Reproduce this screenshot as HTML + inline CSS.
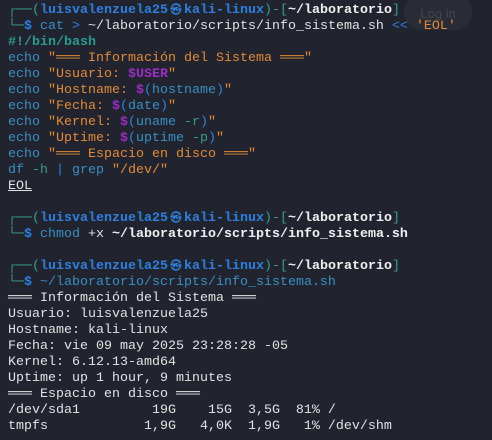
<!DOCTYPE html>
<html><head><meta charset="utf-8"><style>
html,body{margin:0;padding:0;background:#21242e;width:492px;height:440px;overflow:hidden;position:relative}
pre{margin:0;position:absolute;left:8px;top:3px;font-family:"Liberation Mono","DejaVu Sans Mono",monospace;font-size:13.33px;line-height:16px;color:#e2e2e2;white-space:pre}
.g{color:#3a9c8e}.b{color:#2f7fe0;font-weight:bold}.w{color:#f0f0f0;font-weight:bold}
.c{color:#3a8fc4}.o{color:#e28a3a}.p{color:#9b2fc4;font-weight:bold}.bl{color:#2f7fe0}
.t{color:#2e9a8e;font-weight:bold}.u{text-decoration:underline}
.k{display:inline-block;width:16px;text-align:center;font-size:11px}
.login{position:absolute;left:404px;top:-6px;width:68px;height:36px;border-radius:18px;background:rgba(255,255,255,0.04);color:rgba(255,255,255,0.12);font-family:"Liberation Sans",sans-serif;font-size:13px;text-align:center;line-height:40px}
</style></head><body>
<div class="login">Log in</div>
<pre><span class="g">┌──(</span><span class="b">luisvalenzuela25<span class="k">㉿</span>kali-linux</span><span class="g">)-[</span><span class="w">~/laboratorio</span><span class="g">]</span>
<span class="g">└─</span><span class="b">$</span> <span class="c">cat</span> <span class="bl">&gt;</span> ~/laboratorio/scripts/info_sistema.sh <span class="bl">&lt;&lt;</span> <span class="o">'EOL'</span>
<span class="t">#!/bin/bash</span>
<span class="c">echo</span> <span class="o">"═══ Información del Sistema ═══"</span>
<span class="c">echo</span> <span class="o">"Usuario: </span><span class="p">$USER</span><span class="o">"</span>
<span class="c">echo</span> <span class="o">"Hostname: </span><span class="p">$</span><span class="bl">(</span><span class="c">hostname</span><span class="bl">)</span><span class="o">"</span>
<span class="c">echo</span> <span class="o">"Fecha: </span><span class="p">$</span><span class="bl">(</span><span class="c">date</span><span class="bl">)</span><span class="o">"</span>
<span class="c">echo</span> <span class="o">"Kernel: </span><span class="p">$</span><span class="bl">(</span><span class="c">uname</span> <span class="g">-r</span><span class="bl">)</span><span class="o">"</span>
<span class="c">echo</span> <span class="o">"Uptime: </span><span class="p">$</span><span class="bl">(</span><span class="c">uptime</span> <span class="g">-p</span><span class="bl">)</span><span class="o">"</span>
<span class="c">echo</span> <span class="o">"═══ Espacio en disco ═══"</span>
<span class="c">df</span> <span class="g">-h</span> <span class="bl">|</span> <span class="c">grep</span> <span class="o">"/dev/"</span>
<span class="u">EOL</span>

<span class="g">┌──(</span><span class="b">luisvalenzuela25<span class="k">㉿</span>kali-linux</span><span class="g">)-[</span><span class="w">~/laboratorio</span><span class="g">]</span>
<span class="g">└─</span><span class="b">$</span> <span class="c">chmod</span> +x <span class="w">~/laboratorio/scripts/info_sistema.sh</span>

<span class="g">┌──(</span><span class="b">luisvalenzuela25<span class="k">㉿</span>kali-linux</span><span class="g">)-[</span><span class="w">~/laboratorio</span><span class="g">]</span>
<span class="g">└─</span><span class="b">$</span> <span class="c">~/laboratorio/scripts/info_sistema.sh</span>
═══ Información del Sistema ═══
Usuario: luisvalenzuela25
Hostname: kali-linux
Fecha: vie 09 may 2025 23:28:28 -05
Kernel: 6.12.13-amd64
Uptime: up 1 hour, 9 minutes
═══ Espacio en disco ═══
/dev/sda1         19G    15G  3,5G  81% /
tmpfs            1,9G   4,0K  1,9G   1% /dev/shm</pre>
</body></html>
